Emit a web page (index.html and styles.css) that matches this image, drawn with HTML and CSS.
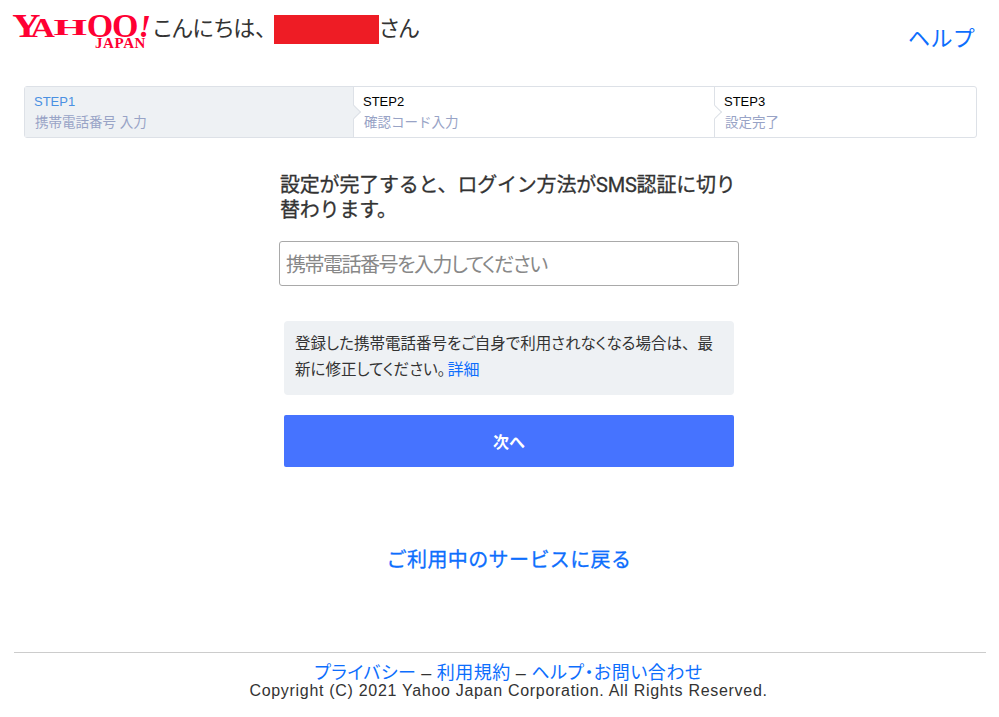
FILE: index.html
```html
<!DOCTYPE html>
<html lang="ja">
<head>
<meta charset="utf-8">
<title>SMS認証</title>
<link rel="stylesheet" href="styles.css">
</head>
<body>
<header class="top">
  <div class="brand">
    <div class="logo"><span class="logo-main"><span class="y">Y</span><span class="a">A</span><span class="h">H</span><span class="o">OO</span><span class="bang">!</span></span><span class="logo-sub">JAPAN</span></div>
    <div class="greet">こんにちは、<span class="redact"></span>さん</div>
  </div>
  <a class="help" href="#">ヘルプ</a>
</header>
<ol class="steps">
  <li class="step current"><b>STEP1</b><span>携帯電話番号 入力</span></li>
  <li class="step two"><b>STEP2</b><span>確認コード入力</span></li>
  <li class="step three"><b>STEP3</b><span>設定完了</span></li>
</ol>
<main class="main">
  <h1 class="title">設定が完了すると、ログイン方法がSMS認証に切り<br>替わります。</h1>
  <input class="phone" type="text" placeholder="携帯電話番号を入力してください">
  <p class="note">登録した携帯電話番号をご自身で利用されなくなる場合は<span class="full">、</span>最新に修正してください。<a href="#">詳細</a></p>
  <button class="next" type="button">次へ</button>
  <a class="back" href="#">ご利用中のサービスに戻る</a>
</main>
<footer class="foot">
  <div class="links"><a href="#">プライバシー</a><span class="sep">–</span><a href="#">利用規約</a><span class="sep">–</span><a href="#">ヘルプ・お問い合わせ</a></div>
  <div class="copy">Copyright (C) 2021 Yahoo Japan Corporation. All Rights Reserved.</div>
</footer>
</body>
</html>
```
FILE: styles.css
```css
* { box-sizing: border-box; }
html, body { margin: 0; padding: 0; }
body {
  background: #fff;
  color: #333;
  font-family: Roboto, "Noto Sans CJK JP", sans-serif;
  height: 717px;
  overflow: hidden;
}
a { color: #0d6efd; text-decoration: none; }

.top {
  display: flex;
  justify-content: space-between;
  padding: 14px 24px 0 14px;
  height: 86px;
}
.brand { display: flex; align-items: flex-start; }
.logo {
  width: 136px;
  height: 36px;
  display: flex;
  flex-direction: column;
  align-items: flex-end;
  font-family: "Liberation Serif", serif;
  font-weight: 700;
  color: #ff0033;
  line-height: 1;
}
.logo-main {
  display: flex;
  align-items: baseline;
  height: 22px;
  line-height: 24px;
  white-space: nowrap;
}
.logo-main span { display: inline-block; }
.y { font-size: 34px; transform: scaleX(1.15); margin-right: -7px; }
.a { font-size: 27px; transform: scaleX(1.25); margin: 0 1px 0 2px; }
.h { font-size: 24px; transform: scaleX(1.8) translateY(-2px); margin: 0 7px; }
.o { font-size: 34px; letter-spacing: -1px; }
.logo-main .bang { font-size: 32px; font-style: italic; transform: translateX(1px); }
.logo-sub { font-size: 15px; line-height: 14px; margin: 0 4px 0 0; letter-spacing: 0.6px; }
.greet {
  margin-left: 3px;
  font-size: 22px;
  line-height: 30px;
  display: flex;
  align-items: flex-start;
  white-space: nowrap;
  font-feature-settings: "palt";
}
.redact { display: block; width: 105px; height: 29px; margin: 1px 0 0 8px; background: #ee1c25; }
.help { font-size: 22px; line-height: 30px; margin-top: 10px; letter-spacing: 0.3px; }

.steps {
  list-style: none;
  display: flex;
  margin: 0 22px 0 24px;
  padding: 0;
  height: 52px;
  border: 1px solid #dde1e7;
  border-radius: 3px;
  font-family: "Liberation Sans", "Noto Sans CJK JP", sans-serif;
}
.step {
  position: relative;
  display: flex;
  flex-direction: column;
  padding: 5px 0 0 9px;
  font-size: 13.5px;
  line-height: 22px;
}
.step b { font-weight: 400; color: #000; font-size: 13px; line-height: 20px; }
.step span { color: #98a3c6; line-height: 21px; margin-left: 1px; }
.current { width: 328px; background: #eef1f4; }
.current b { color: #4a90e2; }
.two { width: 361px; border-left: 1px solid #dde1e7; }
.three { flex: 1; border-left: 1px solid #dde1e7; }
.two::before, .three::before {
  content: "";
  position: absolute;
  left: -5px;
  top: 20px;
  width: 9px;
  height: 9px;
  transform: rotate(45deg);
  border-top: 1px solid #dde1e7;
  border-right: 1px solid #dde1e7;
}
.two::before { background: #eef1f4; }
.three::before { background: #fff; }

.main {
  width: 460px;
  margin: 0 0 0 279px;
  padding-top: 35px;
  display: flex;
  flex-direction: column;
  align-items: center;
}
.title {
  margin: 0;
  width: 460px;
  padding: 0 0 0 1px;
  font-size: 20px;
  font-weight: 400;
  -webkit-text-stroke: 0.3px #333;
  line-height: 25px;
  letter-spacing: -0.2px;
  white-space: nowrap;
}
.phone {
  margin-top: 18px;
  width: 460px;
  height: 45px;
  border: 1px solid #a9a9a9;
  border-radius: 3px;
  padding: 2px 6px 0;
  font: 400 20px Roboto, "Noto Sans CJK JP", sans-serif;
  font-feature-settings: "palt";
  letter-spacing: -1.5px;
  color: #333;
}
.phone::placeholder { color: #888; opacity: 1; }
.note {
  margin: 35px 0 0;
  width: 450px;
  height: 74px;
  padding: 11px 11px 0;
  background: #eef1f4;
  border-radius: 4px;
  font-size: 15.5px;
  line-height: 25px;
  font-feature-settings: "palt";
}
.note a { font-size: 16px; margin-left: 2px; }
.full { font-feature-settings: normal; }
.next {
  margin-top: 20px;
  width: 450px;
  height: 52px;
  border: 0;
  border-radius: 2px;
  background: #4673ff;
  color: #fff;
  font: 700 16px Roboto, "Noto Sans CJK JP", sans-serif;
}
.back {
  margin-top: 79px;
  font-size: 20px;
  -webkit-text-stroke: 0.3px #0d6efd;
  line-height: 28px;
  letter-spacing: 0.4px;
}

.foot {
  margin: 78px 13px 0 14px;
  border-top: 1px solid #ccc;
  padding: 10px 0 0 17px;
  text-align: center;
  font-family: "Liberation Sans", "Noto Sans CJK JP", sans-serif;
}
.links { font-size: 18px; line-height: 20px; color: #333; font-feature-settings: "palt"; letter-spacing: 0.5px; }
.sep { margin: 0 5px; }
.copy { font-size: 16px; line-height: 16px; letter-spacing: 0.7px; }
```
